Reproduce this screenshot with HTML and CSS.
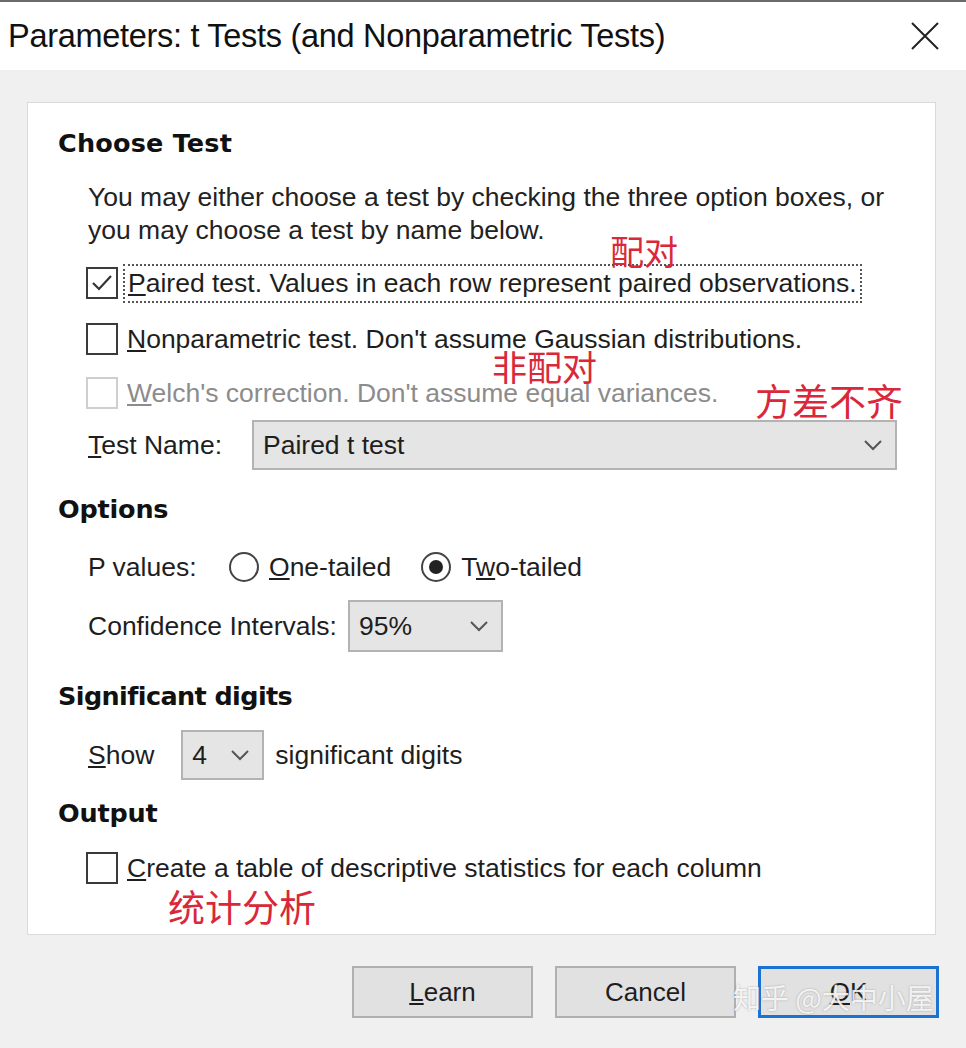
FILE: index.html
```html
<!DOCTYPE html>
<html>
<head>
<meta charset="utf-8">
<link rel="stylesheet" href="styles.css">
</head>
<body>
<div class="window">
  <div class="titlebar">
    <span class="title">Parameters: t Tests (and Nonparametric Tests)</span>
    <svg class="close" width="30" height="30" viewBox="0 0 30 30"><path d="M2 2 L28 28 M28 2 L2 28" stroke="#222" stroke-width="2" fill="none"/></svg>
  </div>
  <div class="body">
    <div class="panel">
      <div class="h h1">Choose Test</div>
      <div class="para">You may either choose a test by checking the three option boxes, or<br>you may choose a test by name below.</div>
      <div class="row cb r1">
        <span class="box"><svg width="28" height="28" viewBox="0 0 28 28"><path d="M5 14 L11 20 L23 7" stroke="#333" stroke-width="2.2" fill="none"/></svg></span>
        <span class="lbl focus"><u>P</u>aired test. Values in each row represent paired observations.</span>
      </div>
      <div class="row cb r2">
        <span class="box"></span>
        <span class="lbl"><u>N</u>onparametric test. Don't assume Gaussian distributions.</span>
      </div>
      <div class="row cb r3 disabled">
        <span class="box"></span>
        <span class="lbl"><u>W</u>elch's correction. Don't assume equal variances.</span>
      </div>
      <div class="row r4">
        <span class="lab tn"><u>T</u>est Name:</span>
        <div class="select wide"><span>Paired t test</span><svg class="chev" width="20" height="12" viewBox="0 0 20 12"><path d="M2 2 L10 10 L18 2" stroke="#555" stroke-width="2" fill="none"/></svg></div>
      </div>
      <div class="h h2">Options</div>
      <div class="row r5">
        <span class="lab pv">P values:</span>
        <span class="radio"></span><span class="lbl one"><u>O</u>ne-tailed</span>
        <span class="radio on"><i></i></span><span class="lbl">T<u>w</u>o-tailed</span>
      </div>
      <div class="row r6">
        <span class="lab ci">Confidence Intervals:</span>
        <div class="select ci-sel"><span>95%</span><svg class="chev" width="20" height="12" viewBox="0 0 20 12"><path d="M2 2 L10 10 L18 2" stroke="#555" stroke-width="2" fill="none"/></svg></div>
      </div>
      <div class="h h3">Significant digits</div>
      <div class="row r7">
        <span class="lab show"><u>S</u>how</span>
        <div class="select dg"><span>4</span><svg class="chev" width="20" height="12" viewBox="0 0 20 12"><path d="M2 2 L10 10 L18 2" stroke="#555" stroke-width="2" fill="none"/></svg></div>
        <span class="lbl sd">significant digits</span>
      </div>
      <div class="h h4">Output</div>
      <div class="row cb r8">
        <span class="box"></span>
        <span class="lbl"><u>C</u>reate a table of descriptive statistics for each column</span>
      </div>
      <span class="note n1">配对</span>
      <span class="note n2">非配对</span>
      <span class="note n3">方差不齐</span>
      <span class="note n4">统计分析</span>
    </div>
    <div class="buttons">
      <button class="btn"><u>L</u>earn</button>
      <button class="btn">Cancel</button>
      <button class="btn ok"><u>O</u>K</button>
      <span class="wm">知乎 @大中小屋</span>
    </div>
  </div>
</div>
</body>
</html>
```
FILE: styles.css
```css
html, body {
  margin: 0;
  padding: 0;
  background: #f0f0f0;
}
.window {
  width: 966px;
  height: 1048px;
  font-family: "Liberation Sans", Arial, sans-serif;
  color: #1e1e1e;
  position: relative;
  overflow: hidden;
}
.titlebar {
  height: 68px;
  background: #ffffff;
  border-top: 2px solid #6a6a6a;
  display: flex;
  align-items: center;
  justify-content: space-between;
  padding: 0 26px 0 8px;
}
.title {
  font-size: 32.5px;
  color: #111;
  letter-spacing: -0.3px;
}
.close { display: block; }
.body {
  padding: 32px 0 0 27px;
}
.panel {
  position: relative;
  width: 909px;
  height: 833px;
  background: #fff;
  border: 1px solid #dadada;
  box-sizing: border-box;
  padding: 0 0 0 30px;
  display: flex;
  flex-direction: column;
  font-size: 26.5px;
}
.h {
  font-family: "DejaVu Sans", sans-serif;
  font-weight: bold;
  font-size: 25.5px;
  height: 36px;
  line-height: 36px;
  color: #111;
  letter-spacing: -0.2px;
}
.h1 { margin-top: 22px; letter-spacing: 0.2px; }
.h2 { margin-top: 21px; }
.h3 { margin-top: 26px; letter-spacing: -0.6px; }
.h4 { margin-top: 15px; }
.para {
  margin: 20px 0 0 30px;
  line-height: 33px;
  color: #222;
  white-space: nowrap;
}
.row {
  display: flex;
  align-items: center;
  margin-left: 28px;
}
.cb { height: 40px; }
.r1 { margin-top: 16px; }
.r2 { margin-top: 16px; }
.r3 { margin-top: 14px; }
.r4 { margin-top: 7px; margin-left: 30px; }
.r5 { margin-top: 20px; height: 40px; margin-left: 30px; }
.r6 { margin-top: 13px; margin-left: 30px; }
.r7 { margin-top: 16px; margin-left: 30px; }
.r8 { margin-top: 17px; }
.box {
  width: 32px;
  height: 32px;
  border: 2px solid #3a3a3a;
  box-sizing: border-box;
  display: flex;
  align-items: center;
  justify-content: center;
  background: #fff;
  margin-right: 9px;
}
.lbl { white-space: nowrap; }
.focus {
  outline: 2px dotted #555;
  outline-offset: 2px;
  padding: 0 1px;
}
.disabled .box { border-color: #cfcfcf; }
.disabled .lbl { color: #8c8c8c; }
.lab { white-space: nowrap; }
.tn { width: 164px; }
.select {
  height: 50px;
  background: #e5e5e5;
  border: 2px solid #b3b3b3;
  box-sizing: border-box;
  display: flex;
  align-items: center;
  justify-content: space-between;
  padding: 0 12px 0 9px;
}
.wide { width: 645px; }
.ci-sel { width: 155px; height: 52px; margin-left: 11px; }
.dg { width: 83px; margin-left: 27px; }
.sd { margin-left: 11px; }
.chev { display: block; }
.pv { width: 141px; }
.radio {
  width: 30px;
  height: 30px;
  border: 2px solid #444;
  border-radius: 50%;
  box-sizing: border-box;
  display: flex;
  align-items: center;
  justify-content: center;
  margin-right: 10px;
}
.radio i {
  width: 14px;
  height: 14px;
  background: #222;
  border-radius: 50%;
}
.one { margin-right: 30px; }
.note {
  position: absolute;
  font-family: "Noto Sans CJK SC", sans-serif;
  color: #d8283a;
  line-height: 1;
  white-space: nowrap;
}
.n1 { left: 582px; top: 131px; font-size: 34px; }
.n2 { left: 464px; top: 245px; font-size: 35px; }
.n3 { left: 727px; top: 279px; font-size: 37px; }
.n4 { left: 140px; top: 785px; font-size: 37px; }
.buttons {
  position: relative;
  display: flex;
  gap: 22px;
  margin: 31px 0 0 325px;
}
.btn {
  width: 181px;
  height: 52px;
  background: #e1e1e1;
  border: 2px solid #b0b0b0;
  font-family: "Liberation Sans", Arial, sans-serif;
  font-size: 26px;
  color: #1e1e1e;
  padding: 0;
}
.ok { border: 3px solid #1b72d0; }
.wm {
  position: absolute;
  left: 381px;
  top: 11px;
  font-family: "Noto Sans CJK SC", sans-serif;
  font-size: 28px;
  color: rgba(255,255,255,0.85);
  text-shadow: 0 0 2px rgba(120,120,120,0.6);
  white-space: nowrap;
}
```
